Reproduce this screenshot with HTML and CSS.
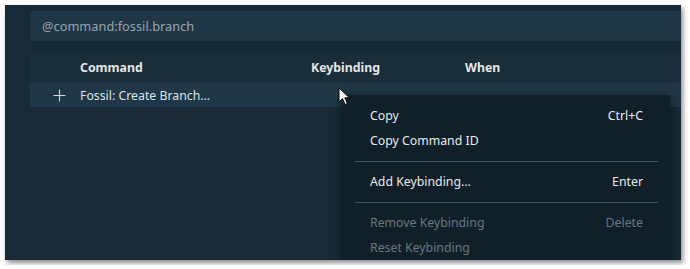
FILE: index.html
```html
<!DOCTYPE html>
<html>
<head>
    <title>Keyboard Shortcuts</title>
    <link rel="stylesheet" href="styles.css">
</head>
<body>
<div class="window">
    <div class="search">@command:fossil.branch</div>

    <div class="table">
        <div class="head">
            <div class="col-command">Command</div>
            <div class="col-key">Keybinding</div>
            <div class="col-when">When</div>
        </div>
        <div class="row">
            <span class="add-icon">
                <svg width="13" height="13" viewBox="0 0 13 13">
                    <path d="M6.5 0.5v12M0.5 6.5h12" stroke="#d4d8db" stroke-width="1.1" fill="none"/>
                </svg>
            </span>
            <span class="row-label">Fossil: Create Branch...</span>
        </div>
    </div>

    <div class="menu">
        <div class="menu-item"><span>Copy</span><span>Ctrl+C</span></div>
        <div class="menu-item"><span>Copy Command ID</span></div>
        <div class="sep"></div>
        <div class="menu-item"><span>Add Keybinding...</span><span>Enter</span></div>
        <div class="sep"></div>
        <div class="menu-item disabled"><span>Remove Keybinding</span><span>Delete</span></div>
        <div class="menu-item disabled"><span>Reset Keybinding</span></div>
    </div>

    <svg class="cursor" width="14" height="20" viewBox="0 0 14 20">
        <path d="M1 1 L1 15 L4.5 11.6 L7.2 17.6 L9.4 16.6 L6.8 10.8 L11.5 10.8 Z" fill="#ffffff" stroke="#000000" stroke-width="1"/>
    </svg>
</div>
</body>
</html>
```

FILE: styles.css
```css
body {
    margin: 0;
    background-color: #ffffff;
    font-family: "Segoe UI", "Noto Sans", "Open Sans", sans-serif;
    font-size: 12.3px;
}

.window {
    position: relative;
    overflow: hidden;
    margin: 5px;
    width: 676px;
    height: 255px;
    background-color: #182a35;
    box-shadow: 2px 3px 5px rgba(0, 0, 0, 0.45);
}

.search {
    margin: 6px 0 0 25px;
    height: 30px;
    line-height: 30px;
    padding-left: 12px;
    background-color: #1f3646;
    color: #98a4ac;
    font-size: 12.8px;
}

.table {
    margin: 11px 0 0 25px;
}

.head {
    display: flex;
    align-items: center;
    height: 30px;
    padding-bottom: 1px;
    background-color: #1a2d3a;
    color: #e6e6e6;
    font-weight: bold;
}

.col-command {
    padding-left: 50px;
    width: 231px;
}

.col-key {
    width: 154px;
}

.row {
    display: flex;
    align-items: center;
    height: 24px;
    background-color: #1f3747;
    color: #dde2e5;
}

.add-icon {
    display: flex;
    margin-left: 23px;
    width: 27px;
}

.menu {
    position: absolute;
    left: 338px;
    top: 90px;
    width: 327px;
    padding-top: 8px;
    height: 170px;
    background-color: #111f29;
    box-shadow: 0 2px 10px rgba(0, 0, 0, 0.6);
    color: #e8eaec;
}

.menu-item {
    display: flex;
    justify-content: space-between;
    align-items: center;
    height: 25px;
    padding: 0 27px;
}

.menu-item.disabled {
    color: #6a7780;
}

.sep {
    margin: 8px 12px 7px;
    border-top: 1px solid #45535c;
}

.cursor {
    position: absolute;
    left: 333px;
    top: 82px;
}
```
